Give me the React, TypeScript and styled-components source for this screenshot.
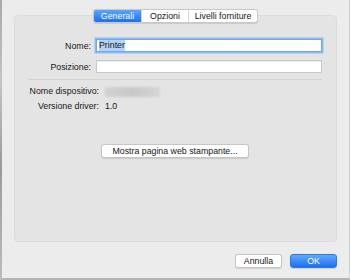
import * as React from 'react'
import styled, { createGlobalStyle } from 'styled-components'

const GlobalStyle = createGlobalStyle`
  html, body {
    margin: 0;
    padding: 0;
    background: #ececec;
  }
  body {
    font-family: "Liberation Sans", Arial, sans-serif;
    font-size: 8.8px;
    color: #161616;
  }
`

const Screen = styled.div`
  display: flex;
  width: 350px;
  height: 280px;
  overflow: hidden;
`

const BehindStrip = styled.div`
  width: 2px;
  background: linear-gradient(#a9a9a9, #c4c4c4 30%, #9a9a9a 60%, #bcbcbc);
`

const Dialog = styled.div`
  flex: 1;
  display: flex;
  flex-direction: column;
  background: #ececec;
  border-right: 1px solid #d0d0d0;
  border-bottom: 2px solid #b4b4b4;
  padding: 9px 12px 0 12px;
  box-sizing: border-box;
`

const Tabs = styled.div`
  display: flex;
  align-self: center;
  height: 12px;
  background: #fff;
  border: 1px solid #c9c9c9;
  border-radius: 3px;
  box-shadow: 0 0.5px 1px rgba(0, 0, 0, 0.12);
  position: relative;
  z-index: 1;
`

const Tab = styled.div<{ $active?: boolean; $w: number }>`
  width: ${p => p.$w}px;
  display: flex;
  align-items: center;
  justify-content: center;
  line-height: 12px;
  color: ${p => (p.$active ? '#fff' : '#161616')};
  background: ${p => (p.$active ? 'linear-gradient(#5da5fa, #1b6ff4)' : 'transparent')};
  border-radius: ${p => (p.$active ? '2px 0 0 2px' : '0')};
  & + & {
    border-left: 1px solid #d4d4d4;
  }
`

const Panel = styled.div`
  height: 227px;
  margin-top: -8px;
  background: #e4e4e4;
  border: 1px solid #dcdcdc;
  border-radius: 4px;
  padding: 23px 14px 0 13px;
  box-sizing: border-box;
  display: flex;
  flex-direction: column;
`

const FormGrid = styled.div`
  display: grid;
  grid-template-columns: 63px 1fr;
  column-gap: 5px;
  row-gap: 8px;
  align-items: center;
`

const Label = styled.div`
  text-align: right;
  white-space: nowrap;
`

const Field = styled.div<{ $focused?: boolean }>`
  height: 13px;
  box-sizing: border-box;
  background: #fff;
  border: 1px solid ${p => (p.$focused ? '#6ea7ee' : '#c8c8c8')};
  box-shadow: ${p => (p.$focused ? '0 0 0 1.5px #8dbcf5' : 'inset 0 0.5px 0 #d8d8d8')};
  display: flex;
  align-items: center;
  padding: 0 2px;
`

const Selected = styled.span`
  background: #b3d3fb;
  line-height: 11px;
`

const Separator = styled.div`
  height: 1px;
  background: #d3d3d3;
  margin: 6px 0 0 0;
`

const InfoGrid = styled.div`
  display: grid;
  grid-template-columns: 71px 1fr;
  column-gap: 6px;
  row-gap: 4px;
  margin-top: 6px;
  align-items: center;
  line-height: 11px;
`

const Blurred = styled.div`
  width: 55px;
  height: 10px;
  background: linear-gradient(90deg, #d2d2d2, #c8c8c8 50%, #d6d6d6);
  filter: blur(1px);
`

const CenterRow = styled.div`
  display: flex;
  justify-content: center;
  margin-top: 32px;
`

const Button = styled.div<{ $primary?: boolean; $w: number }>`
  width: ${p => p.$w}px;
  height: 14px;
  box-sizing: border-box;
  display: flex;
  align-items: center;
  justify-content: center;
  border-radius: 3px;
  color: ${p => (p.$primary ? '#fff' : '#161616')};
  background: ${p => (p.$primary ? 'linear-gradient(#62a9fb, #1c6ff3)' : '#fff')};
  border: 1px solid ${p => (p.$primary ? '#2c79e8' : '#c6c6c6')};
  box-shadow: 0 0.5px 1px rgba(0, 0, 0, 0.12);
`

const Footer = styled.div`
  display: flex;
  justify-content: flex-end;
  gap: 8px;
  margin-top: 12px;
`

export default function App() {
  return (
    <>
      <GlobalStyle />
      <Screen>
        <BehindStrip />
        <Dialog>
          <Tabs>
            <Tab $active $w={47}>Generali</Tab>
            <Tab $w={46}>Opzioni</Tab>
            <Tab $w={68}>Livelli forniture</Tab>
          </Tabs>
          <Panel>
            <FormGrid>
              <Label>Nome:</Label>
              <Field $focused>
                <Selected>Printer</Selected>
              </Field>
              <Label>Posizione:</Label>
              <Field />
            </FormGrid>
            <Separator />
            <InfoGrid>
              <Label>Nome dispositivo:</Label>
              <Blurred />
              <Label>Versione driver:</Label>
              <div>1.0</div>
            </InfoGrid>
            <CenterRow>
              <Button $w={148}>Mostra pagina web stampante...</Button>
            </CenterRow>
          </Panel>
          <Footer>
            <Button $w={47}>Annulla</Button>
            <Button $primary $w={47}>OK</Button>
          </Footer>
        </Dialog>
      </Screen>
    </>
  )
}
